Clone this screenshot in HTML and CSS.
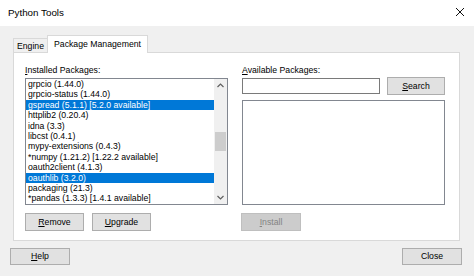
FILE: index.html
```html
<!DOCTYPE html>
<html>
<head>
<meta charset="utf-8">
<link rel="stylesheet" href="styles.css">
</head>
<body>
<div class="window">
  <div class="titlebar">
    <span class="title">Python Tools</span>
    <svg class="close-x" width="10" height="10" viewBox="0 0 10 10"><path d="M1 1L9 9M9 1L1 9" stroke="#111" stroke-width="1" fill="none"/></svg>
  </div>
  <div class="client">
    <div class="tabs">
      <div class="tab">Engine</div>
      <div class="tab active">Package Management</div>
    </div>
    <div class="panel">
      <div class="col">
        <div class="label"><u>I</u>nstalled Packages:</div>
        <div class="listbox installed">
          <div class="items">
            <div class="item">grpcio (1.44.0)</div>
            <div class="item">grpcio-status (1.44.0)</div>
            <div class="item sel">gspread (5.1.1) [5.2.0 available]</div>
            <div class="item">httplib2 (0.20.4)</div>
            <div class="item">idna (3.3)</div>
            <div class="item">libcst (0.4.1)</div>
            <div class="item">mypy-extensions (0.4.3)</div>
            <div class="item">*numpy (1.21.2) [1.22.2 available]</div>
            <div class="item">oauth2client (4.1.3)</div>
            <div class="item sel">oauthlib (3.2.0)</div>
            <div class="item">packaging (21.3)</div>
            <div class="item">*pandas (1.3.3) [1.4.1 available]</div>
          </div>
          <div class="scrollbar">
            <div class="arrow"><svg width="7" height="5" viewBox="0 0 7 5"><path d="M0.5 4L3.5 1L6.5 4" stroke="#606060" stroke-width="1.2" fill="none"/></svg></div>
            <div class="track"><div class="thumb"></div></div>
            <div class="arrow"><svg width="7" height="5" viewBox="0 0 7 5"><path d="M0.5 1L3.5 4L6.5 1" stroke="#606060" stroke-width="1.2" fill="none"/></svg></div>
          </div>
        </div>
        <div class="btnrow">
          <button class="btn"><u>R</u>emove</button>
          <button class="btn"><u>U</u>pgrade</button>
        </div>
      </div>
      <div class="col">
        <div class="label"><u>A</u>vailable Packages:</div>
        <div class="searchrow">
          <div class="input"></div>
          <button class="btn search"><u>S</u>earch</button>
        </div>
        <div class="listbox available"></div>
        <div class="btnrow">
          <button class="btn disabled"><u>I</u>nstall</button>
        </div>
      </div>
    </div>
    <div class="footer">
      <button class="btn"><u>H</u>elp</button>
      <button class="btn">Close</button>
    </div>
  </div>
</div>
</body>
</html>
```
FILE: styles.css
```css
* { box-sizing: border-box; }
html, body { margin: 0; padding: 0; }
body {
  width: 474px;
  height: 276px;
  overflow: hidden;
  font-family: "Liberation Sans", Arial, sans-serif;
  font-size: 8.7px;
  color: #000;
}
.window {
  width: 474px;
  height: 276px;
  background: #f0f0f0;
  display: flex;
  flex-direction: column;
}
.titlebar {
  height: 26px;
  background: #fff;
  display: flex;
  align-items: center;
  justify-content: space-between;
  padding: 0 9px 2px 8px;
}
.title { font-size: 9.8px; }
.close-x { display: block; }
.client {
  padding: 9px 14px 0 13px;
  display: flex;
  flex-direction: column;
}
.tabs {
  display: flex;
  align-items: flex-end;
  height: 17px;
  position: relative;
  z-index: 1;
}
.tab {
  height: 14px;
  width: 35px;
  border: 1px solid #d9d9d9;
  border-bottom: none;
  background: #f0f0f0;
  display: flex;
  align-items: center;
  justify-content: center;
  line-height: 12px;
}
.tab.active {
  height: 18px;
  width: 101px;
  margin-left: -1px;
  margin-bottom: -1px;
  background: #fff;
  padding-bottom: 2px;
}
.panel {
  height: 189px;
  background: #fff;
  border: 1px solid #d9d9d9;
  padding: 11px 14px 9px 11px;
  display: flex;
  gap: 14px;
}
.col {
  width: 203px;
  display: flex;
  flex-direction: column;
}
.label {
  height: 12px;
  line-height: 12px;
  margin-bottom: 2px;
}
.listbox {
  border: 1px solid #828790;
  background: #fff;
}
.installed {
  height: 127px;
  display: flex;
  overflow: hidden;
}
.items {
  flex: 1;
  overflow: hidden;
}
.item {
  height: 10.4px;
  line-height: 10.4px;
  padding-left: 2px;
  white-space: nowrap;
}
.item.sel {
  background: #0078d7;
  color: #fff;
}
.scrollbar {
  width: 13px;
  background: #f0f0f0;
  display: flex;
  flex-direction: column;
}
.arrow {
  height: 13px;
  display: flex;
  align-items: center;
  justify-content: center;
}
.arrow svg { display: block; }
.track { flex: 1; }
.thumb {
  margin: 40px 1px 0 1px;
  height: 19px;
  background: #cdcdcd;
}
.btnrow {
  display: flex;
  gap: 8px;
  margin-top: 8px;
}
.btn {
  font: inherit;
  color: #000;
  width: 59px;
  height: 18px;
  padding: 0;
  background: #e1e1e1;
  border: 1px solid #adadad;
  line-height: 16px;
}
.btn.disabled {
  background: #cccccc;
  border-color: #bfbfbf;
  color: #838383;
  margin-left: -1px;
  width: 60px;
}
.searchrow {
  display: flex;
  align-items: center;
  gap: 7px;
  margin-top: -1px;
  height: 18px;
}
.input {
  width: 138px;
  height: 16px;
  border: 1px solid #7a7a7a;
  background: #fff;
}
.btn.search { width: 58px; }
.available {
  margin-top: 5px;
  height: 107px;
}
.footer {
  display: flex;
  justify-content: space-between;
  margin: 7px -2px 0 -3px;
}
.footer .btn { width: 60px; height: 17px; line-height: 15px; }
```
